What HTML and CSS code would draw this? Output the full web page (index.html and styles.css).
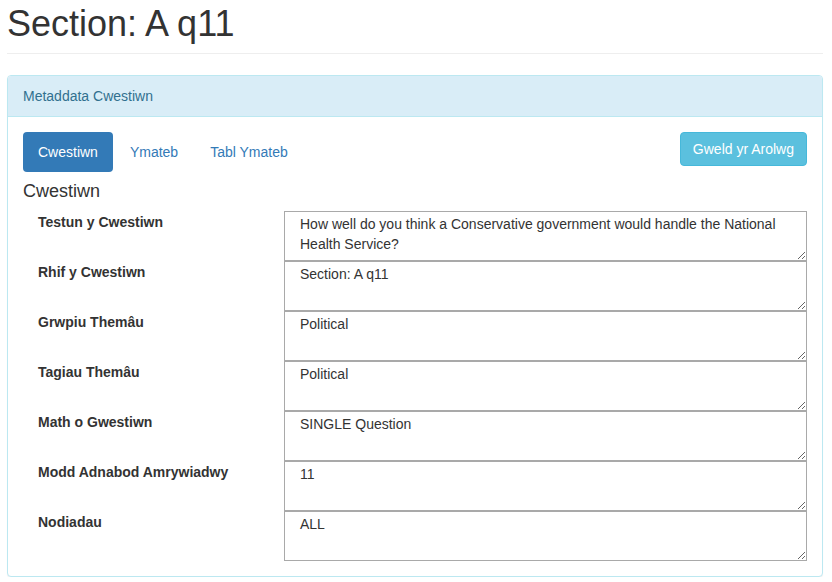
FILE: index.html
```html
<!DOCTYPE html>
<html>
<head>
<meta charset="utf-8">
<link rel="stylesheet" href="styles.css">
</head>
<body>
<div class="page">
  <h1 class="page-header">Section: A q11</h1>
  <div class="panel">
    <div class="panel-heading">Metaddata Cwestiwn</div>
    <div class="panel-body">
      <div class="toolbar">
        <ul class="pills">
          <li class="pill active"><a href="#">Cwestiwn</a></li>
          <li class="pill"><a href="#">Ymateb</a></li>
          <li class="pill"><a href="#">Tabl Ymateb</a></li>
        </ul>
        <button class="btn-info">Gweld yr Arolwg</button>
      </div>
      <h4 class="section-title">Cwestiwn</h4>
      <div class="fields">
        <label class="field-label">Testun y Cwestiwn</label>
        <textarea class="field-input" readonly>How well do you think a Conservative government would handle the National Health Service?</textarea>
        <label class="field-label">Rhif y Cwestiwn</label>
        <textarea class="field-input" readonly>Section: A q11</textarea>
        <label class="field-label">Grwpiu Themâu</label>
        <textarea class="field-input" readonly>Political</textarea>
        <label class="field-label">Tagiau Themâu</label>
        <textarea class="field-input" readonly>Political</textarea>
        <label class="field-label">Math o Gwestiwn</label>
        <textarea class="field-input" readonly>SINGLE Question</textarea>
        <label class="field-label">Modd Adnabod Amrywiadwy</label>
        <textarea class="field-input" readonly>11</textarea>
        <label class="field-label">Nodiadau</label>
        <textarea class="field-input" readonly>ALL</textarea>
      </div>
    </div>
  </div>
</div>
</body>
</html>
```
FILE: styles.css
```css
* { box-sizing: border-box; }
html, body { margin: 0; padding: 0; background: #fff; }
body {
  font-family: "Liberation Sans", Arial, sans-serif;
  font-size: 14px;
  line-height: 20px;
  color: #333;
}
.page { padding: 0 9px 0 7px; }
.page-header {
  margin: 4px 0 21px;
  padding-bottom: 9px;
  border-bottom: 1px solid #eee;
  font-size: 36px;
  font-weight: 500;
  line-height: 39.6px;
  color: #333;
}
.panel {
  border: 1px solid #bce8f1;
  border-radius: 4px;
  background: #fff;
  box-shadow: 0 1px 1px rgba(0,0,0,0.05);
}
.panel-heading {
  background: #d9edf7;
  color: #31708f;
  padding: 10px 15px;
  border-bottom: 1px solid #bce8f1;
  border-radius: 3px 3px 0 0;
}
.panel-body { padding: 15px; }
.toolbar {
  display: flex;
  justify-content: space-between;
  align-items: flex-start;
}
.pills {
  list-style: none;
  margin: 0;
  padding: 0;
  display: flex;
  gap: 2px;
}
.pill a {
  display: block;
  padding: 10px 15px;
  border-radius: 4px;
  color: #337ab7;
  text-decoration: none;
}
.pill.active a { background: #337ab7; color: #fff; }
.btn-info {
  font-family: inherit;
  font-size: 14px;
  line-height: 20px;
  padding: 6px 12px;
  color: #fff;
  background: #5bc0de;
  border: 1px solid #46b8da;
  border-radius: 4px;
}
.section-title {
  margin: 10px 0 10px;
  font-size: 18px;
  font-weight: 500;
  line-height: 19.8px;
}
.fields {
  display: grid;
  grid-template-columns: 261px 1fr;
}
.field-label {
  display: block;
  padding: 1px 15px 0;
  font-weight: bold;
}
.field-input {
  display: block;
  width: 100%;
  height: 50px;
  margin: 0;
  padding: 2px 15px;
  font-family: "Liberation Sans", Arial, sans-serif;
  font-size: 14px;
  line-height: 20px;
  color: #333;
  border: 1px solid #a9a9a9;
  background: #fff;
  resize: vertical;
  outline: none;
}
```
